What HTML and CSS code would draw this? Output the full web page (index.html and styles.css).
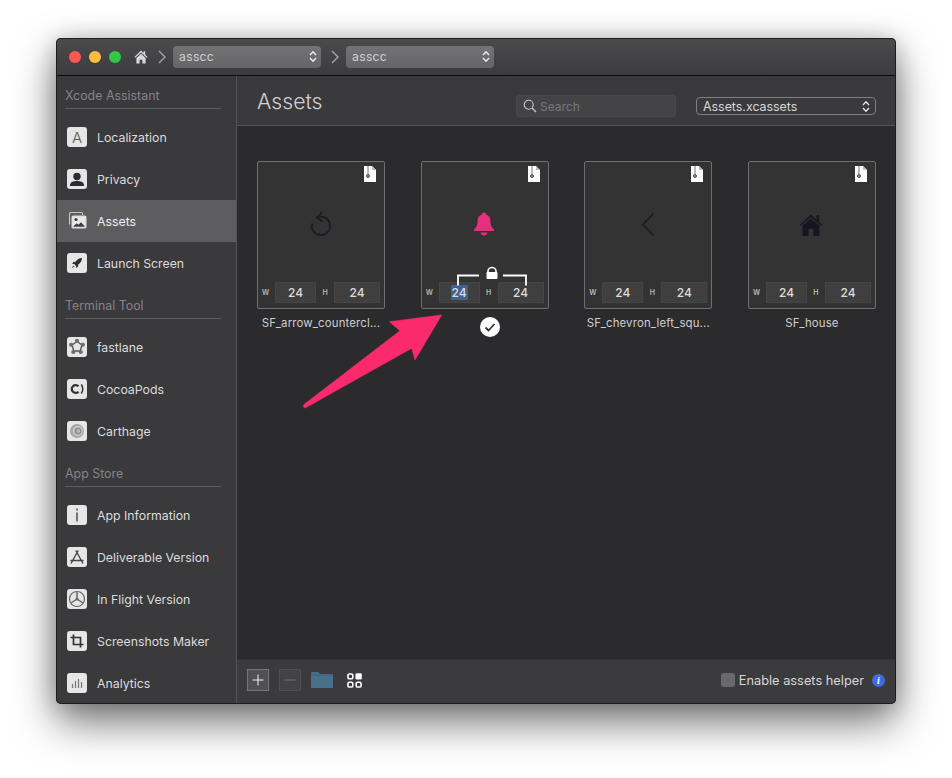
FILE: index.html
```html
<!DOCTYPE html>
<html lang="en">
<head>
<meta charset="utf-8">
<title>Assets</title>
<link rel="stylesheet" href="styles.css">
</head>
<body>
<div class="window">
  <header class="titlebar">
    <div class="lights"><span class="light red"></span><span class="light yellow"></span><span class="light green"></span></div>
    <svg class="home" viewBox="0 0 14 14"><path d="M7 .6 9.600 3V1.200h1.600v3.300L13.600 7l-.8.8L7 2.400 1.200 7.800.4 7z" fill="#d8d8d8"/><path d="M2.400 8 7 3.700 11.600 8v5.600H8.400V9.800H5.600v3.800H2.400z" fill="#d8d8d8"/></svg>
    <svg class="crumb" viewBox="0 0 8 14"><path d="M1 1l6 6-6 6" fill="none" stroke="#a8a8a8" stroke-width="1.300"/></svg>
    <div class="path-select"><span>asscc</span><svg class="updown" viewBox="0 0 8 13"><path d="M1 5l3-3.200L7 5M1 8l3 3.200L7 8" fill="none" stroke="#eee" stroke-width="1.400"/></svg></div>
    <svg class="crumb" viewBox="0 0 8 14"><path d="M1 1l6 6-6 6" fill="none" stroke="#a8a8a8" stroke-width="1.300"/></svg>
    <div class="path-select"><span>asscc</span><svg class="updown" viewBox="0 0 8 13"><path d="M1 5l3-3.200L7 5M1 8l3 3.200L7 8" fill="none" stroke="#eee" stroke-width="1.400"/></svg></div>
  </header>
  <div class="body">
    <nav class="sidebar">
      <div class="section">Xcode Assistant</div>
      <div class="item"><span class="tile tile-letter">A</span>Localization</div>
      <div class="item"><span class="tile"><svg viewBox="0 0 20 20"><circle cx="10" cy="7.500" r="3.700" fill="#2c2c2e"/><path d="M3 17v-1.200c.6-2.800 3.400-3.800 7-3.800s6.400 1 7 3.800V17z" fill="#2c2c2e"/></svg></span>Privacy</div>
      <div class="item active"><span class="tile tile-clear"><svg viewBox="0 0 20 20"><path d="M2.500 13.500V2.500a1 1 0 0 1 1-1h11a1 1 0 0 1 1 1V4" fill="none" stroke="#c4c4c4" stroke-width="1.100"/><rect x="4.500" y="4.500" width="15" height="13" rx="1.500" fill="#dcdcdc"/><rect x="5.800" y="5.800" width="12.400" height="10.400" fill="#e8e8e8"/><circle cx="9" cy="8.500" r="1.600" fill="#3c3c3c"/><path d="M6 15.800l3.500-3.500 2 1.500 2.500-2.500 4 4.500z" fill="#3c3c3c"/></svg></span>Assets</div>
      <div class="item"><span class="tile"><svg viewBox="0 0 20 20"><path d="M15 5c-2.800.2-5 1.500-6.500 3.700L6.500 9 5 10.800l2.200.3 1.700 1.700.3 2.200 1.800-1.500.3-2C13.600 10 14.800 7.800 15 5z" fill="#2e2e30"/><path d="M6.500 12.500l-1.700 2.700 2.700-1.700z" fill="#2e2e30"/></svg></span>Launch Screen</div>

      <div class="section">Terminal Tool</div>
      <div class="item"><span class="tile"><svg viewBox="0 0 20 20"><path d="M10 4.500l5 3.500-1.800 6h-6.400L5 8z" fill="none" stroke="#555" stroke-width="1.400"/><g fill="#6c6c6c"><circle cx="10" cy="3.800" r="2.100"/><circle cx="15.800" cy="7.800" r="2.100"/><circle cx="13.700" cy="15" r="2.100"/><circle cx="6.300" cy="15" r="2.100"/><circle cx="4.200" cy="7.800" r="2.100"/></g></svg></span>fastlane</div>
      <div class="item"><span class="tile"><svg viewBox="0 0 20 20"><path d="M11.500 7.300a3.900 3.900 0 1 0 0 5.400" fill="none" stroke="#333" stroke-width="2.300"/><path d="M14.300 5.500c1.800 2.700 1.800 6.300 0 9" fill="none" stroke="#333" stroke-width="1.500"/></svg></span>CocoaPods</div>
      <div class="item"><span class="tile"><svg viewBox="0 0 20 20"><circle cx="10" cy="10" r="7" fill="#a6a6a6"/><circle cx="10.800" cy="10" r="5" fill="#d0d0d0"/><circle cx="11" cy="10" r="3.500" fill="#8a8a8a"/><circle cx="11.300" cy="10" r="2" fill="#bbb"/></svg></span>Carthage</div>

      <div class="section">App Store</div>
      <div class="item"><span class="tile"><svg viewBox="0 0 20 20"><rect x="9.300" y="3.500" width="1.400" height="2" fill="#444"/><rect x="9.300" y="7.500" width="1.400" height="9" fill="#444"/></svg></span>App Information</div>
      <div class="item"><span class="tile"><svg viewBox="0 0 20 20"><path d="M8.800 3.500l5.800 10.500M11.200 3.500L5.400 14M3.500 13.500h13M4 16.500l1.400-2.500M16 16.500L14.600 14" fill="none" stroke="#444" stroke-width="1.400"/></svg></span>Deliverable Version</div>
      <div class="item"><span class="tile"><svg viewBox="0 0 20 20"><circle cx="10" cy="10" r="7.500" fill="none" stroke="#666" stroke-width="1.200"/><path d="M10 10V3M10 10l-6 4M10 10l6 4" stroke="#666" stroke-width="1.500"/><circle cx="10" cy="10" r="1.500" fill="#666"/></svg></span>In Flight Version</div>
      <div class="item"><span class="tile"><svg viewBox="0 0 20 20"><path d="M6.500 3.500V13.500h10M3.500 6.500H13.500v10" fill="none" stroke="#333" stroke-width="1.700"/></svg></span>Screenshots Maker</div>
      <div class="item"><span class="tile"><svg viewBox="0 0 20 20"><path d="M5.500 11v4M8.500 8v7M11.500 6v9M14.500 9v6" stroke="#777" stroke-width="1.200"/></svg></span>Analytics</div>
    </nav>

    <main class="main">
      <div class="main-head">
        <h1 class="title">Assets</h1>
        <div class="search"><svg viewBox="0 0 14 14"><circle cx="5.700" cy="5.700" r="4.500" fill="none" stroke="#c8c8c8" stroke-width="1.100"/><path d="M9 9l4 4" stroke="#c8c8c8" stroke-width="1.300"/></svg><span>Search</span></div>
        <div class="dropdown"><span>Assets.xcassets</span><svg class="updown" viewBox="0 0 8 13"><path d="M1 5l3-3.200L7 5M1 8l3 3.200L7 8" fill="none" stroke="#e8e8e8" stroke-width="1.300"/></svg></div>
      </div>

      <div class="content">
        <div class="asset">
          <div class="card">
            <svg class="zip" viewBox="0 0 12 16"><path d="M0 0h8l4 4v12H0z" fill="#fff"/><path d="M8 0v4h4z" fill="#bbb"/><path d="M4 .5v7.500" stroke="#555" stroke-width="1.600" stroke-dasharray="1 1"/><circle cx="4" cy="10" r="1.500" fill="#888" stroke="#555"/></svg>
            <div class="preview"><svg class="glyph" viewBox="0 0 26 26"><path d="M9 4.500a9.200 9.200 0 1 1-5 6" transform="translate(1 2)" fill="none" stroke="#1c1b26" stroke-width="1.800"/><path d="M15 1.500L10 6.500l5 4" fill="none" stroke="#1c1b26" stroke-width="1.800"/></svg></div>
            <div class="dims"><span class="dim-label">W</span><span class="field">24</span><span class="dim-label">H</span><span class="field field-wide">24</span></div>
          </div>
          <div class="name">SF_arrow_countercl...</div>
        </div>

        <div class="asset">
          <div class="card">
            <svg class="zip" viewBox="0 0 12 16"><path d="M0 0h8l4 4v12H0z" fill="#fff"/><path d="M8 0v4h4z" fill="#bbb"/><path d="M4 .5v7.500" stroke="#555" stroke-width="1.600" stroke-dasharray="1 1"/><circle cx="4" cy="10" r="1.500" fill="#888" stroke="#555"/></svg>
            <div class="preview"><svg class="glyph glyph-shift" viewBox="0 0 26 26"><path d="M13 1.500c1.200 0 2 .8 2.100 1.900 3 .9 4.400 3.300 4.400 6.600 0 4.500 1.300 6.500 3.500 8.500v1.500H3V18.500c2.200-2 3.500-4 3.500-8.500 0-3.300 1.400-5.700 4.400-6.600.1-1.100.9-1.900 2.100-1.900z" fill="#e5307e"/><path d="M9.500 21.500h7c-.4 1.900-1.800 3-3.500 3s-3.100-1.100-3.500-3z" fill="#e5307e"/></svg></div>
            <svg class="link" viewBox="0 0 70 20"><path d="M1 19.500V9.500h21M46 9.500h23v10" fill="none" stroke="#fff" stroke-width="1.800"/><path d="M31 7V5a3.500 3 0 0 1 8 0V7" fill="none" stroke="#fff" stroke-width="1.600"/><rect x="29.500" y="6" width="11" height="7" rx="1" fill="#fff"/></svg>
            <div class="dims"><span class="dim-label">W</span><span class="field"><span class="selected">24</span></span><span class="dim-label">H</span><span class="field field-wide">24</span></div>
          </div>
          <div class="check"><svg viewBox="0 0 20 20"><path d="M5.500 10.500l3 3 6-6.500" fill="none" stroke="#333" stroke-width="1.800"/></svg></div>
        </div>

        <div class="asset">
          <div class="card">
            <svg class="zip" viewBox="0 0 12 16"><path d="M0 0h8l4 4v12H0z" fill="#fff"/><path d="M8 0v4h4z" fill="#bbb"/><path d="M4 .5v7.500" stroke="#555" stroke-width="1.600" stroke-dasharray="1 1"/><circle cx="4" cy="10" r="1.500" fill="#888" stroke="#555"/></svg>
            <div class="preview"><svg class="glyph glyph-shift" viewBox="0 0 26 26"><path d="M18.500 2.500L8 13.500l10.500 11" fill="none" stroke="#1c1b26" stroke-width="1.800"/></svg></div>
            <div class="dims"><span class="dim-label">W</span><span class="field">24</span><span class="dim-label">H</span><span class="field field-wide">24</span></div>
          </div>
          <div class="name">SF_chevron_left_squ...</div>
        </div>

        <div class="asset">
          <div class="card">
            <svg class="zip" viewBox="0 0 12 16"><path d="M0 0h8l4 4v12H0z" fill="#fff"/><path d="M8 0v4h4z" fill="#bbb"/><path d="M4 .5v7.500" stroke="#555" stroke-width="1.600" stroke-dasharray="1 1"/><circle cx="4" cy="10" r="1.500" fill="#888" stroke="#555"/></svg>
            <div class="preview"><svg class="glyph glyph-shift" viewBox="0 0 26 26"><path d="M13 3.500l5.500 5V4H21v6.800l3 2.700-1 1L13 6 3 14.500l-1-1z" fill="#141722"/><path d="M4.500 14.500L13 7.500l8.500 7V25h-6v-7h-5v7h-6z" fill="#141722"/></svg></div>
            <div class="dims"><span class="dim-label">W</span><span class="field">24</span><span class="dim-label">H</span><span class="field field-wide">24</span></div>
          </div>
          <div class="name">SF_house</div>
        </div>
      </div>

      <footer class="footer">
        <button class="tool tool-on"><svg viewBox="0 0 22 22"><path d="M11 5v12M5 11h12" stroke="#f0f0f0" stroke-width="1.100"/></svg></button>
        <button class="tool tool-off"><svg viewBox="0 0 22 22"><path d="M5 11h12" stroke="#77767a" stroke-width="1.100"/></svg></button>
        <svg class="folder" viewBox="0 0 22 16"><path d="M0 1a1 1 0 0 1 1-1h6l2 2h12a1 1 0 0 1 1 1v12a1 1 0 0 1-1 1H1a1 1 0 0 1-1-1z" fill="#47708a"/><path d="M0 3h22" stroke="#3b5f75" stroke-width=".8"/></svg>
        <svg class="apps" viewBox="0 0 16 16"><g fill="none" stroke="#fff" stroke-width="1.700"><rect x="1" y="1" width="5.200" height="5.200" rx="1.500"/><rect x="1" y="9.800" width="5.200" height="5.200" rx="1.500"/><rect x="9.800" y="9.800" width="5.200" height="5.200" rx="1.500"/></g><rect x="9" y="0.200" width="6.800" height="6.800" rx="1.500" fill="#fff"/></svg>
        <div class="helper">
          <span class="checkbox"></span><span class="helper-label">Enable assets helper</span>
          <span class="info">i</span>
        </div>
      </footer>
    </main>
  </div>
  <svg class="arrow" viewBox="0 0 150 100"><path d="M138.700 2 86.300 8.700l10.700 9L1 91.500c-1.500 1.500-.5 3.500 1.500 3.300L108.700 35.300l3.300 11.700z" fill="#fb2a6c" stroke="#fb2a6c" stroke-width=".6" stroke-linejoin="round"/></svg>
</div>
</body>
</html>
```
FILE: styles.css
```css
* { box-sizing: border-box; }
html, body { margin: 0; height: 100%; }
body {
  background: #fff;
  padding: 38px 56px 74px;
  font-family: Inter, "Liberation Sans", sans-serif;
  font-size: 12.400px;
  color: #ddd;
  overflow: hidden;
}
svg { display: block; flex: none; }

.window {
  position: relative;
  width: 840px;
  height: 666px;
  display: flex;
  flex-direction: column;
  border-radius: 5px;
  overflow: hidden;
  background: #3a393c;
}
.window::after {
  content: "";
  position: absolute;
  inset: 0;
  border-radius: 5px;
  box-shadow: inset 0 0 0 1px #1d1d1f;
  pointer-events: none;
}
body::before {
  content: "";
  position: absolute;
  left: 56px;
  top: 38px;
  width: 840px;
  height: 666px;
  border-radius: 5px;
  box-shadow: 0 18px 42px rgba(0, 0, 0, .55), 0 0 22px rgba(0, 0, 0, .18);
}

/* Title bar */
.titlebar {
  height: 38px;
  flex: none;
  display: flex;
  align-items: center;
  padding-left: 13px;
  background: linear-gradient(#4b4a4d, #3c3b3e);
  border-bottom: 1px solid #0d0d0e;
}
.lights { display: flex; gap: 8px; }
.light { width: 12px; height: 12px; border-radius: 50%; }
.red { background: #fc5753; }
.yellow { background: #fdbc40; }
.green { background: #33c748; }
.home { width: 14px; height: 14px; margin-left: 13px; }
.crumb { width: 8px; height: 14px; margin: 0 7px 0 10px; }
.path-select {
  width: 148px;
  height: 22px;
  padding: 0 4px 0 6px;
  border-radius: 4px;
  background: linear-gradient(#737275, #656467);
  display: flex;
  align-items: center;
  justify-content: space-between;
  font-size: 12.200px;
  color: #d0d0d0;
  letter-spacing: .3px;
}
.updown { width: 8px; height: 13px; }

/* Layout */
.body { flex: 1; display: flex; min-height: 0; }

/* Sidebar */
.sidebar {
  width: 181px;
  flex: none;
  background: #3a393c;
  border-right: 1px solid #545356;
}
.section {
  height: 35px;
  margin: 0 15px 7px 9px;
  padding-bottom: 5px;
  display: flex;
  align-items: flex-end;
  border-bottom: 1px solid #5d5c5f;
  font-size: 12.400px;
  color: #858487;
}
.section:first-child { height: 33px; }
.item {
  height: 42px;
  padding-left: 11px;
  display: flex;
  align-items: center;
  gap: 10px;
  font-size: 12.300px;
  color: #dcdcdc;
}
.active { background: #5d5c5f; color: #f0f0f0; }
.tile {
  width: 20px;
  height: 20px;
  flex: none;
  border-radius: 3px;
  background: #e6e6e6;
  display: flex;
  align-items: center;
  justify-content: center;
}
.tile svg { width: 20px; height: 20px; }
.tile-letter { font-size: 15px; font-weight: 300; color: #555; }
.tile-clear { background: transparent; }

/* Main */
.main { flex: 1; min-width: 0; display: flex; flex-direction: column; }
.main-head {
  height: 50px;
  flex: none;
  display: flex;
  align-items: center;
  padding: 0 20px 0 20px;
  background: #3a393c;
  border-bottom: 1px solid #545356;
}
.title {
  margin: 0 auto 0 0;
  font-size: 21.200px;
  font-weight: 300;
  color: #d2d2d2;
}
.search {
  width: 160px;
  height: 22px;
  margin-top: 11px;
  padding-left: 6px;
  display: flex;
  align-items: center;
  gap: 3px;
  border: 1px solid #48474a;
  border-radius: 3px;
  background: #444346;
  color: #78777a;
  font-size: 12px;
}
.search svg { width: 14px; height: 14px; }
.dropdown {
  width: 180px;
  height: 18px;
  margin: 11px 0 0 20px;
  padding: 0 5px 0 6px;
  display: flex;
  align-items: center;
  justify-content: space-between;
  border: 1px solid #807f82;
  border-radius: 4px;
  font-size: 12.400px;
  color: #d8d8d8;
}

.content {
  flex: 1;
  min-height: 0;
  display: flex;
  justify-content: space-between;
  align-items: flex-start;
  padding: 35px 20px 0;
  background: #2b2a2d;
}
.asset { width: 128px; display: flex; flex-direction: column; align-items: center; }
.card {
  position: relative;
  width: 128px;
  height: 148px;
  display: flex;
  flex-direction: column;
  border: 1px solid #6f6e71;
  border-radius: 2px;
  background: #333333;
}
.zip { position: absolute; top: 4px; right: 8px; width: 12px; height: 16px; }
.preview { flex: 1; display: flex; align-items: center; justify-content: center; padding-top: 3px; }
.glyph { width: 26px; height: 26px; margin-left: -3px; }
.glyph-shift { margin-left: -1px; }
.link { position: absolute; left: 35px; top: 104px; width: 70px; height: 20px; }
.dims { height: 24px; flex: none; display: flex; align-items: flex-start; padding-left: 4px; margin-bottom: 2px; }
.dim-label {
  width: 13px;
  height: 21px;
  font-size: 7px;
  font-weight: 600;
  color: #b8b8b8;
  display: flex;
  align-items: center;
}
.dim-label + .field + .dim-label { width: 18px; justify-content: center; }
.field {
  width: 41px;
  height: 21px;
  display: flex;
  align-items: center;
  justify-content: center;
  background: #3f3f3f;
  border: 1px solid #454545;
  font-size: 12px;
  font-weight: 500;
  color: #dcdcdc;
}
.field-wide { width: 46px; }
.selected { background: #3f628f; padding: 0 1px; line-height: 15px; }
.name { margin-top: 7px; font-size: 11.400px; line-height: 14px; color: #cfcfcf; white-space: nowrap; letter-spacing: .15px; }
.check {
  width: 20px;
  height: 20px;
  margin: 8px 0 0 10px;
  border-radius: 50%;
  background: #fff;
}

/* Footer */
.footer {
  height: 45px;
  flex: none;
  display: flex;
  align-items: center;
  padding: 0 11px 4px 10px;
  background: #3b3a3d;
  border-top: 1px solid #333235;
}
.tool {
  width: 22px;
  height: 22px;
  padding: 0;
  background: transparent;
  margin-right: 10px;
}
.tool-on { border: 1px solid #77767a; background: #504f52; }
.tool-off { border: 1px solid #4f4e51; background: #434245; }
.tool svg { width: 20px; height: 20px; }
.folder { width: 22px; height: 16px; }
.apps { width: 15px; height: 15px; margin-left: 14px; }
.helper { margin-left: auto; display: flex; align-items: center; }
.checkbox {
  width: 14px;
  height: 14px;
  border-radius: 3px;
  background: #69686b;
  margin-right: 4px;
}
.helper-label { font-size: 12.800px; color: #d8d8d8; }
.info {
  width: 13px;
  height: 13px;
  margin-left: 8px;
  border-radius: 50%;
  background: #3e6be0;
  color: #fff;
  font: italic 700 10px/13px "Liberation Serif", serif;
  text-align: center;
}

/* Annotation */
.arrow { position: absolute; left: 247px; top: 275px; width: 150px; height: 100px; }
```
